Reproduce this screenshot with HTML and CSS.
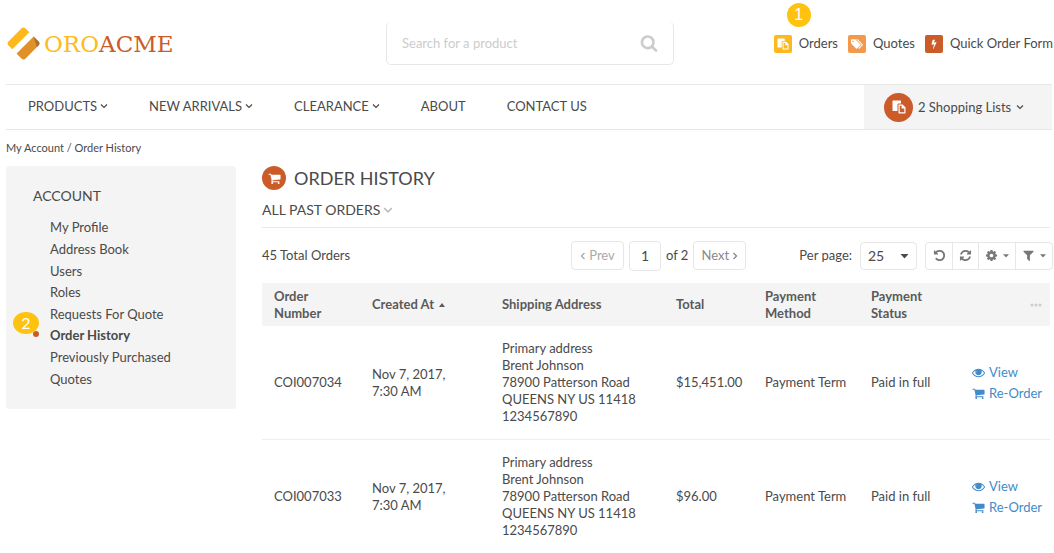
FILE: index.html
```html
<!DOCTYPE html>
<html lang="en">
<head>
<meta charset="utf-8">
<meta name="viewport" content="width=device-width, initial-scale=1">
<title>Order History</title>
<link rel="stylesheet" href="styles.css">
</head>
<body>
<svg class="sprite" aria-hidden="true">
  <symbol id="search" viewBox="0 0 1792 1792"><path d="M1216 832q0-185-131.5-316.5t-316.5-131.5-316.5 131.5-131.5 316.5 131.5 316.5 316.5 131.5 316.5-131.5 131.5-316.5zm512 832q0 52-38 90t-90 38q-54 0-90-38l-343-342q-179 124-399 124-143 0-273.5-55.5t-225-150-150-225-55.5-273.5 55.5-273.5 150-225 225-150 273.5-55.5 273.5 55.5 225 150 150 225 55.5 273.5q0 220-124 399l343 343q37 37 37 90z"/></symbol>
  <symbol id="eye" viewBox="0 0 1792 1792"><path d="M1664 960q-152-236-381-353 61 104 61 225 0 185-131.5 316.5t-316.5 131.5-316.5-131.5-131.5-316.5q0-121 61-225-229 117-381 353 133 205 333.5 326.5t434.5 121.5 434.5-121.5 333.5-326.5zm-720-384q0-20-14-34t-34-14q-125 0-214.5 89.5t-89.5 214.5q0 20 14 34t34 14 34-14 14-34q0-86 61-147t147-61q20 0 34-14t14-34zm848 384q0 34-20 69-140 230-376.5 368.5t-499.5 138.5-499.5-139-376.5-368q-20-35-20-69t20-69q140-229 376.5-368t499.5-139 499.5 139 376.5 368q20 35 20 69z"/><circle cx="896" cy="830" r="330"/></symbol>
  <symbol id="cart" viewBox="0 0 1792 1792"><path d="M704 1536q0 52-38 90t-90 38-90-38-38-90 38-90 90-38 90 38 38 90zm896 0q0 52-38 90t-90 38-90-38-38-90 38-90 90-38 90 38 38 90zm128-1088v512q0 24-16.5 42.5t-40.5 21.5l-1044 122q13 60 13 70 0 16-24 64h920q26 0 45 19t19 45-19 45-45 19h-1024q-26 0-45-19t-19-45q0-11 8-31.5t16-36 21.5-40 15.5-29.5l-177-823h-204q-26 0-45-19t-19-45 19-45 45-19h256q16 0 28.5 6.5t19.5 15.5 13 24.5 8 26 5.5 29.5 4.5 26h1201q26 0 45 19t19 45z"/></symbol>
  <symbol id="refresh" viewBox="0 0 1792 1792"><path d="M1639 1056q0 5-1 7-64 268-268 434.5t-478 166.5q-146 0-282.5-55t-243.5-157l-129 129q-19 19-45 19t-45-19-19-45v-448q0-26 19-45t45-19h448q26 0 45 19t19 45-19 45l-137 137q71 66 161 102t187 36q134 0 250-65t186-179q11-17 53-117 8-23 30-23h192q13 0 22.5 9.5t9.5 22.5zm25-800v448q0 26-19 45t-45 19h-448q-26 0-45-19t-19-45 19-45l138-138q-148-137-349-137-134 0-250 65t-186 179q-11 17-53 117-8 23-30 23h-199q-13 0-22.5-9.5t-9.5-22.5v-7q65-268 270-434.5t480-166.5q146 0 284 55.5t245 156.5l130-129q19-19 45-19t45 19 19 45z"/></symbol>
  <symbol id="undo" viewBox="0 0 1792 1792"><path d="M1664 896q0 156-61 298t-164 245-245 164-298 61q-172 0-327-72.5t-264-204.5q-7-10-6.5-22.5t8.5-20.5l137-138q10-9 25-9 16 2 23 12 73 95 179 147t225 52q104 0 198.5-40.5t163.5-109.5 109.5-163.5 40.5-198.5-40.5-198.5-109.5-163.5-163.5-109.5-198.5-40.5q-98 0-188 35.5t-160 101.5l137 138q31 30 14 69-17 40-59 40h-448q-26 0-45-19t-19-45v-448q0-42 40-59 39-17 69 14l130 129q107-101 244.5-156.5t284.5-55.5q156 0 298 61t245 164 164 245 61 298z"/></symbol>
  <symbol id="cog" viewBox="0 0 1792 1792"><path d="M1152 896q0-106-75-181t-181-75-181 75-75 181 75 181 181 75 181-75 75-181zm512-109v222q0 12-8 23t-20 13l-185 28q-19 54-39 91 35 50 107 138 10 12 10 25t-9 23q-27 37-99 108t-94 71q-12 0-26-9l-138-108q-44 23-91 38-16 136-29 186-7 28-36 28h-222q-14 0-24.5-8.5t-11.5-21.5l-28-184q-49-16-90-37l-141 107q-10 9-25 9-14 0-25-11-126-114-165-168-7-10-7-23 0-12 8-23 15-21 51-66.5t54-70.5q-27-50-41-99l-183-27q-13-2-21-12.5t-8-23.5v-222q0-12 8-23t19-13l186-28q14-46 39-92-40-57-107-138-10-12-10-24 0-10 9-23 26-36 98.5-107.5t94.5-71.5q13 0 26 10l138 107q44-23 91-38 16-136 29-186 7-28 36-28h222q14 0 24.5 8.5t11.5 21.5l28 184q49 16 90 37l142-107q9-9 24-9 13 0 25 10 129 119 165 170 7 8 7 22 0 12-8 23-15 21-51 66.5t-54 70.5q26 50 41 98l183 28q13 2 21 12.5t8 23.5z"/></symbol>
  <symbol id="filter" viewBox="0 0 1792 1792"><path d="M1595 295q17 41-14 70l-493 493v742q0 42-40 59-13 5-24 5-27 0-45-19l-256-256q-19-19-19-45v-486l-493-493q-31-29-14-70 17-39 59-39h1280q42 0 59 39z"/></symbol>
  <symbol id="tags" viewBox="0 0 1920 1792"><path d="M448 448q0-53-37.5-90.5t-90.5-37.5-90.5 37.5-37.5 90.5 37.5 90.5 90.5 37.5 90.5-37.5 37.5-90.5zm1067 576q0 53-37 90l-491 492q-39 37-91 37-53 0-90-37l-715-716q-38-37-64.5-101t-26.5-117v-416q0-52 38-90t90-38h416q53 0 117 26.5t102 64.5l715 714q37 39 37 91zm384 0q0 53-37 90l-491 492q-39 37-91 37-36 0-59-14t-53-45l470-470q37-37 37-90 0-52-37-91l-715-714q-38-38-102-64.5t-117-26.5h224q53 0 117 26.5t102 64.5l715 714q37 39 37 91z"/></symbol>
  <symbol id="bolt" viewBox="0 0 1792 1792"><path d="M1333 566q18 20 7 44l-540 1157q-13 25-42 25-4 0-14-2-17-5-25.5-19t-4.5-30l197-808-406 101q-4 1-12 1-18 0-31-11-18-15-13-39l201-825q4-14 16-23t28-9h328q19 0 32 12.5t13 29.5q0 8-5 18l-171 463 396-98q8-2 12-2 19 0 34 15z"/></symbol>
  <symbol id="paste" viewBox="0 0 14 14"><path d="M1 .5h7.500q.5 0 .5.500v2.500H6.500Q5.500 3.500 5.500 4.500v6.500H1q-.5 0-.5-.5V1Q.5.500 1 .5z"/><path d="M6.500 4.500h4l3 3V13q0 .5-.5.500H7q-.5 0-.5-.5zM7.700 5.700v6.600h4.600V8.500H9.600V5.700z" fill-rule="evenodd"/><path d="M10.300 4.500v3.200h3.200z"/></symbol>
  <symbol id="down" viewBox="0 0 8 8"><path d="M1 2.500l3 3 3-3" fill="none" stroke="currentColor" stroke-width="1.200"/></symbol>
  <symbol id="left" viewBox="0 0 6 8"><path d="M4.500 1l-3 3 3 3" fill="none" stroke="currentColor" stroke-width="1.300"/></symbol>
  <symbol id="right" viewBox="0 0 6 8"><path d="M1.500 1l3 3-3 3" fill="none" stroke="currentColor" stroke-width="1.300"/></symbol>
  <symbol id="caret" viewBox="0 0 8 5"><path d="M0 0h8L4 4.500z"/></symbol>
</svg>

<header class="header">
  <a class="logo" href="#">
    <svg class="logo-mark" viewBox="-16 -16 32 32" aria-hidden="true">
      <clipPath id="tile-shape"><rect x="-11.700" y="-11.700" width="23.400" height="23.400" rx="3"/></clipPath>
      <g transform="rotate(-45)" clip-path="url(#tile-shape)">
        <path d="M-12-12h24v8.200h-24z" fill="#fdb81e"/>
        <path d="M-12 2.200h24V12h-24z" fill="#e0912a"/>
        <path d="M12 1.500V12H6.500z" fill="#a9702f"/>
      </g>
    </svg>
    <span class="logo-text">ORO<span class="logo-acme">ACME</span></span>
  </a>
  <form class="search">
    <input class="search-input" type="text" placeholder="Search for a product" aria-label="Search for a product">
    <button class="search-button" type="button" aria-label="Search"><svg class="icon icon-lg"><use href="#search"/></svg></button>
  </form>
  <nav class="quick" aria-label="Quick links">
    <a class="quick-link" href="#"><span class="tile tile-yellow"><svg class="icon"><use href="#paste"/></svg></span>Orders<span class="callout callout-one">1</span></a>
    <a class="quick-link" href="#"><span class="tile tile-orange"><svg class="icon"><use href="#tags"/></svg></span>Quotes</a>
    <a class="quick-link" href="#"><span class="tile tile-red"><svg class="icon icon-sm"><use href="#bolt"/></svg></span>Quick Order Form</a>
  </nav>
</header>

<div class="navbar">
  <nav class="menu" aria-label="Main">
    <a href="#">PRODUCTS<svg class="chevron"><use href="#down"/></svg></a>
    <a href="#">NEW ARRIVALS<svg class="chevron"><use href="#down"/></svg></a>
    <a href="#">CLEARANCE<svg class="chevron"><use href="#down"/></svg></a>
    <a href="#">ABOUT</a>
    <a href="#">CONTACT US</a>
  </nav>
  <button class="lists" type="button"><span class="disc disc-lg"><svg class="icon icon-list"><use href="#paste"/></svg></span>2 Shopping Lists<svg class="chevron"><use href="#down"/></svg></button>
</div>

<nav class="crumbs" aria-label="Breadcrumb"><a href="#">My Account</a> / <span>Order History</span></nav>

<div class="content">
  <aside class="sidebar">
    <h2 class="side-title">ACCOUNT</h2>
    <ul class="side-list">
      <li><a href="#">My Profile</a></li>
      <li><a href="#">Address Book</a></li>
      <li><a href="#">Users</a></li>
      <li><a href="#">Roles</a></li>
      <li><a href="#">Requests For Quote</a></li>
      <li class="current"><a href="#" aria-current="page">Order History</a><span class="callout callout-two">2</span></li>
      <li><a href="#">Previously Purchased</a></li>
      <li><a href="#">Quotes</a></li>
    </ul>
  </aside>

  <main class="main">
    <h1 class="title"><span class="disc"><svg class="icon icon-md"><use href="#cart"/></svg></span>ORDER HISTORY</h1>
    <button class="view-switch" type="button">ALL PAST ORDERS<svg class="chevron chevron-pale"><use href="#down"/></svg></button>

    <div class="toolbar">
      <span class="total">45 Total Orders</span>
      <div class="pager">
        <button class="page-button" type="button" disabled><svg class="arrow"><use href="#left"/></svg>Prev</button>
        <input class="page-input" type="text" value="1" aria-label="Page">
        <span>of 2</span>
        <button class="page-button" type="button">Next<svg class="arrow"><use href="#right"/></svg></button>
      </div>
      <div class="tools">
        <label for="per-page">Per page:</label>
        <span class="select">
          <select id="per-page"><option>25</option><option>50</option></select>
          <svg class="select-caret"><use href="#caret"/></svg>
        </span>
        <div class="tool-group">
          <button type="button" aria-label="Reset"><svg class="icon icon-md"><use href="#undo"/></svg></button>
          <button type="button" aria-label="Refresh"><svg class="icon icon-md"><use href="#refresh"/></svg></button>
          <button class="wide" type="button" aria-label="Grid settings"><svg class="icon icon-md"><use href="#cog"/></svg><svg class="caret"><use href="#caret"/></svg></button>
          <button class="wide" type="button" aria-label="Filters"><svg class="icon icon-md"><use href="#filter"/></svg><svg class="caret"><use href="#caret"/></svg></button>
        </div>
      </div>
    </div>

    <table class="orders">
      <colgroup><col class="c-number"><col class="c-created"><col class="c-address"><col class="c-total"><col class="c-method"><col class="c-status"><col></colgroup>
      <thead>
        <tr>
          <th>Order Number</th>
          <th>Created At <svg class="sort"><path d="M0 4L3 0l3 4z"/></svg></th>
          <th>Shipping Address</th>
          <th>Total</th>
          <th>Payment Method</th>
          <th>Payment Status</th>
          <th class="more"><svg class="dots" role="img" aria-label="Actions"><circle cx="2" cy="2" r="1.500"/><circle cx="6" cy="2" r="1.500"/><circle cx="10" cy="2" r="1.500"/></svg></th>
        </tr>
      </thead>
      <tbody>
        <tr>
          <td>COI007034</td>
          <td>Nov 7, 2017,<br>7:30 AM</td>
          <td>Primary address<br>Brent Johnson<br>78900 Patterson Road<br>QUEENS NY US 11418<br>1234567890</td>
          <td>$15,451.00</td>
          <td>Payment Term</td>
          <td>Paid in full</td>
          <td><div class="actions"><a href="#"><svg class="icon icon-md"><use href="#eye"/></svg>View</a><a href="#"><svg class="icon icon-md"><use href="#cart"/></svg>Re-Order</a></div></td>
        </tr>
        <tr>
          <td>COI007033</td>
          <td>Nov 7, 2017,<br>7:30 AM</td>
          <td>Primary address<br>Brent Johnson<br>78900 Patterson Road<br>QUEENS NY US 11418<br>1234567890</td>
          <td>$96.00</td>
          <td>Payment Term</td>
          <td>Paid in full</td>
          <td><div class="actions"><a href="#"><svg class="icon icon-md"><use href="#eye"/></svg>View</a><a href="#"><svg class="icon icon-md"><use href="#cart"/></svg>Re-Order</a></div></td>
        </tr>
      </tbody>
    </table>
  </main>
</div>
</body>
</html>
```
FILE: styles.css
```css
* { box-sizing: border-box; }
body { margin: 0; background: #fff; color: #4a4a4a; font: 13px/17px Lato, sans-serif; }
a { color: inherit; text-decoration: none; }
button, input, select { font: inherit; color: inherit; margin: 0; padding: 0; border: 0; background: none; }
button { cursor: pointer; }
svg { display: block; flex: none; fill: currentColor; }
.sprite { position: absolute; width: 0; height: 0; }
.icon { width: 12px; height: 12px; }
.icon-sm { width: 10px; height: 10px; }
.icon-md { width: 13px; height: 13px; }
.icon-list { width: 14px; height: 14px; }
.icon-lg { width: 18px; height: 18px; }
.chevron { width: 8px; height: 8px; }
.chevron-pale { width: 10px; height: 10px; color: #bbb; }

.header { display: flex; align-items: center; height: 84px; padding: 3px 1px 0 7px; }
.logo { display: flex; align-items: center; gap: 4px; width: 379px; }
.logo-mark { width: 33px; height: 33px; }
.logo-text { font: 23px/32px "DejaVu Serif", serif; color: #fdbb22; }
.logo-acme { color: #cb5b28; }
.search { display: flex; align-items: center; width: 288px; height: 43px; padding: 0 15px; border: 1px solid #e7e7e7; border-top: 0; border-radius: 5px; }
.search-input { flex: 1; min-width: 0; outline: 0; }
.search-input::placeholder { color: #ccc; opacity: 1; }
.search-button { color: #ccc; }
.quick { display: flex; gap: 10px; margin-left: auto; white-space: nowrap; }
.quick-link { position: relative; display: flex; align-items: center; gap: 7px; }
.tile { display: flex; align-items: center; justify-content: center; width: 18px; height: 18px; border-radius: 2px; color: #fff; }
.tile-yellow { background: #fdb81e; }
.tile-orange { background: #f2994c; }
.tile-red { background: #cb5b28; }
.callout { position: absolute; display: flex; align-items: center; justify-content: center; background: #ffc20e; color: #fff; border-radius: 50%; font-weight: 400; }
.callout-one { left: 13px; top: -32px; width: 24px; height: 24px; font: 16px/24px "Liberation Sans", sans-serif; }
.callout-two { left: -37px; top: -15px; width: 26px; height: 22px; font-size: 16px; line-height: 22px; }

.navbar { display: flex; justify-content: space-between; height: 46px; margin: 0 2px 0 6px; border: solid #e7e7e7; border-width: 1px 0; }
.menu { display: flex; align-items: center; gap: 41px; padding: 0 0 2px 22px; }
.menu a { display: flex; align-items: center; gap: 3px; }
.lists { display: flex; align-items: center; width: 188px; padding-left: 20px; gap: 5px; background: #f4f4f4; }
.disc { display: flex; align-items: center; justify-content: center; width: 24px; height: 24px; border-radius: 50%; background: #cb5b28; color: #fff; }
.disc-lg { width: 29px; height: 29px; }

.crumbs { padding: 9px 6px 10px; font-size: 11px; }
.content { display: flex; align-items: flex-start; gap: 26px; padding: 0 4px 0 6px; }
.sidebar { flex: none; width: 230px; padding: 21px 27px 19px; border-radius: 3px; background: #f4f4f4; }
.side-title { margin: 0 0 12px; font-size: 14px; line-height: 18px; font-weight: 400; }
.side-list { display: grid; grid-auto-rows: 1fr; align-items: center; height: 173px; margin: 0; padding: 0 0 0 17px; list-style: none; }
.side-list li { position: relative; }
.current { font-weight: 700; }
.current::before { content: ""; position: absolute; left: -17px; top: 4px; width: 6px; height: 6px; border-radius: 50%; background: #cb5b28; }

.main { flex: 1; min-width: 0; }
.title { display: flex; align-items: center; gap: 8px; margin: 0; font-size: 18px; line-height: 23px; font-weight: 400; }
.view-switch { display: flex; align-items: center; gap: 3px; width: 100%; padding: 11px 0 8px; border-bottom: 1px solid #e7e7e7; font-size: 14px; line-height: 18px; }
.toolbar { display: grid; grid-template-columns: 309px auto 1fr; align-items: center; height: 55px; margin-right: -3px; }
.pager { display: flex; align-items: center; gap: 5px; }
.page-button { display: flex; align-items: center; justify-content: center; gap: 3px; width: 53px; height: 29px; border: 1px solid #e7e7e7; border-radius: 4px; color: #888; }
.page-button:disabled { color: #aaa; }
.page-input { width: 32px; height: 30px; border: 1px solid #e7e7e7; border-radius: 4px; text-align: center; font-size: 14px; }
.arrow { width: 6px; height: 8px; }
.tools { display: flex; align-items: center; justify-content: flex-end; gap: 8px; }
.select { position: relative; display: flex; }
.select select { width: 57px; height: 28px; padding: 0 7px; border: 1px solid #e7e7e7; border-radius: 4px; appearance: none; font-size: 14px; }
.select-caret { position: absolute; right: 8px; top: 12px; width: 9px; height: 5px; pointer-events: none; }
.tool-group { display: flex; height: 28px; border: 1px solid #e7e7e7; border-radius: 4px; color: #777; }
.tool-group button { display: flex; align-items: center; justify-content: center; gap: 5px; width: 26px; }
.tool-group button + button { border-left: 1px solid #e7e7e7; }
.tool-group .wide { width: 37px; }
.caret { width: 6px; height: 4px; }

.orders { width: 100%; table-layout: fixed; border-collapse: collapse; }
.c-number { width: 98px; }
.c-created { width: 130px; }
.c-address { width: 174px; }
.c-total { width: 89px; }
.c-method { width: 106px; }
.c-status { width: 101px; }
.orders th { height: 43px; padding: 4px 12px; background: #f4f4f4; text-align: left; font-weight: 700; color: #5a5a5a; }
.orders td { padding: 14px 0 14px 12px; border-bottom: 1px solid #eee; }
.orders tr:last-child td { border-bottom: 0; }
.orders .more { padding-right: 8px; color: #ccc; }
.sort { display: inline-block; width: 6px; height: 4px; margin: 0 0 2px 2px; }
.dots { width: 12px; height: 4px; margin-left: auto; }
.actions { display: flex; flex-direction: column; gap: 4px; color: #428bca; }
.actions a { display: flex; align-items: center; gap: 4px; }
```
